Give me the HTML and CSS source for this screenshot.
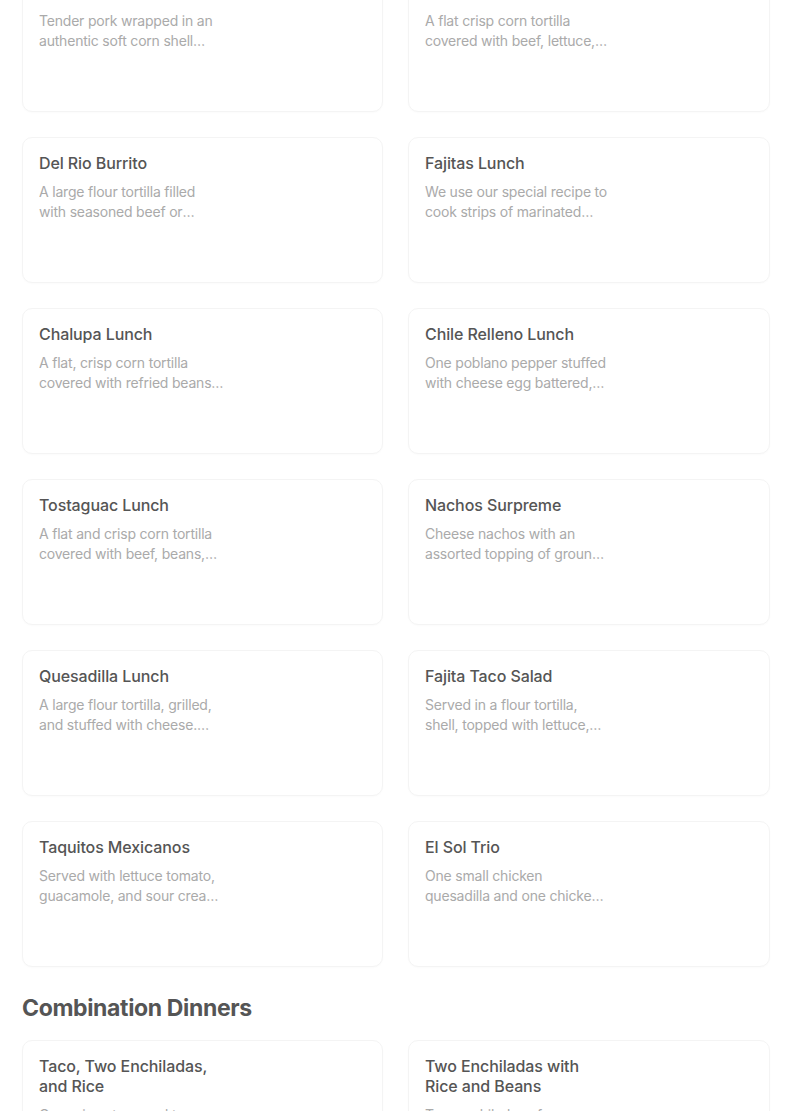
FILE: index.html
```html
<!DOCTYPE html>
<html lang="en">
<head>
    <meta charset="UTF-8">
    <meta name="viewport" content="width=device-width, initial-scale=1.0">
    <title>Menu</title>
    <link rel="stylesheet" href="styles.css">
</head>
<body>
    <div class="menu">
        <div class="grid">
            <div class="card">
                <h3>Carnitas Tacos</h3>
                <p>Tender pork wrapped in an authentic soft corn shell…</p>
            </div>
            <div class="card">
                <h3>Tostada Lunch</h3>
                <p>A flat crisp corn tortilla covered with beef, lettuce, tomato and cheese.</p>
            </div>
            <div class="card">
                <h3>Del Rio Burrito</h3>
                <p>A large flour tortilla filled with seasoned beef or chicken, beans and cheese.</p>
            </div>
            <div class="card">
                <h3>Fajitas Lunch</h3>
                <p>We use our special recipe to cook strips of marinated beef or chicken.</p>
            </div>
            <div class="card">
                <h3>Chalupa Lunch</h3>
                <p>A flat, crisp corn tortilla covered with refried beans, lettuce and cheese.</p>
            </div>
            <div class="card">
                <h3>Chile Relleno Lunch</h3>
                <p>One poblano pepper stuffed with cheese egg battered, topped with sauce.</p>
            </div>
            <div class="card">
                <h3>Tostaguac Lunch</h3>
                <p>A flat and crisp corn tortilla covered with beef, beans, guacamole and cheese.</p>
            </div>
            <div class="card">
                <h3>Nachos Surpreme</h3>
                <p>Cheese nachos with an assorted topping of ground beef, beans and sour cream.</p>
            </div>
            <div class="card">
                <h3>Quesadilla Lunch</h3>
                <p>A large flour tortilla, grilled, and stuffed with cheese. Served with rice.</p>
            </div>
            <div class="card">
                <h3>Fajita Taco Salad</h3>
                <p>Served in a flour tortilla, shell, topped with lettuce, tomato and cheese.</p>
            </div>
            <div class="card">
                <h3>Taquitos Mexicanos</h3>
                <p>Served with lettuce tomato, guacamole, and sour cream on the side.</p>
            </div>
            <div class="card">
                <h3>El Sol Trio</h3>
                <p>One small chicken quesadilla and one chicken flauta with rice.</p>
            </div>
        </div>

        <h2 class="section-title">Combination Dinners</h2>

        <div class="grid">
            <div class="card">
                <h3>Taco, Two Enchiladas, and Rice</h3>
                <p>One crispy taco and two cheese enchiladas served with rice.</p>
            </div>
            <div class="card">
                <h3>Two Enchiladas with Rice and Beans</h3>
                <p>Two enchiladas of your choice served with rice and beans.</p>
            </div>
        </div>
    </div>
</body>
</html>
```

FILE: styles.css
```css
body {
    margin: 0;
    background: #fff;
    font-family: 'Inter', 'Liberation Sans', sans-serif;
}
.menu {
    width: 748px;
    margin: -34px 0 0 22px;
}
.grid {
    display: grid;
    grid-template-columns: 361px 362px;
    column-gap: 25px;
    row-gap: 25px;
}
.card {
    height: 146px;
    box-sizing: border-box;
    padding: 15px 16px;
    border: 1px solid #f4f4f4;
    border-radius: 10px;
    box-shadow: 0 1px 2px rgba(0,0,0,0.02);
}
.card h3 {
    margin: 0;
    max-width: 185px;
    font-size: 16px;
    font-weight: 500;
    line-height: 20px;
    letter-spacing: -0.1px;
    color: #555;
}
.card p {
    margin: 9px 0 0;
    max-width: 185px;
    font-size: 14px;
    line-height: 20px;
    letter-spacing: -0.2px;
    color: #aaa;
    display: -webkit-box;
    -webkit-line-clamp: 2;
    -webkit-box-orient: vertical;
    overflow: hidden;
}
.section-title {
    margin: 0;
    padding: 26px 0 17px;
    font-size: 23px;
    font-weight: 700;
    line-height: 30px;
    letter-spacing: -0.35px;
    color: #555;
}
```
